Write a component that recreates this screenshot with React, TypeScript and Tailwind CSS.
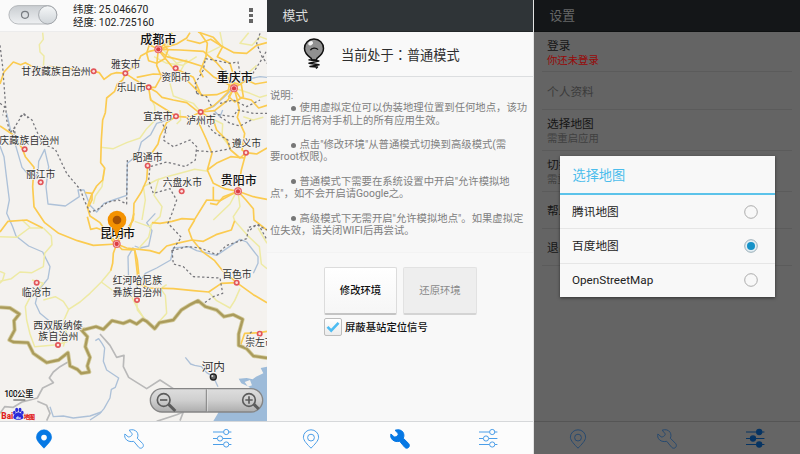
import React from 'react';

const FONT = "font-['Roboto','Noto_Sans_CJK_SC',sans-serif]";

/* ---------- icons ---------- */
type IconProps = { color: string; filled?: boolean; hole?: string };

function PinIcon({ color, filled, hole = '#fcfcfc' }: IconProps) {
  return (
    <svg width="18" height="20" viewBox="0 0 18 20" fill="none">
      <path
        d="M9 19.2C5.6 15.6 1.4 11.7 1.4 8.2A7.6 7.4 0 0 1 16.6 8.2C16.6 11.7 12.4 15.6 9 19.2Z"
        fill={filled ? color : 'none'}
        stroke={color}
        strokeWidth={filled ? 0.6 : 1}
      />
      <circle cx="9" cy="8.6" r={filled ? 2.8 : 3.4} fill={filled ? hole : 'none'} stroke={filled ? 'none' : color} strokeWidth="1" />
    </svg>
  );
}

function WrenchIcon({ color, filled }: IconProps) {
  return (
    <svg width="20" height="20" viewBox="0 0 20 20" fill="none">
      <path
        d="M5 1.300C8 .1 11.400 .7 13 3.200C14.200 5.100 14.200 7.300 13.300 9.200L18.500 14.400C19.700 15.700 19.600 17.300 18.600 18.400C17.500 19.500 15.900 19.500 14.700 18.300L9.700 12.300C7.200 12.900 4.500 12.600 2.600 10.900C.9 9.400 .3 7.200 .9 5L4.200 7.900C5.700 8.100 7.500 7.300 8.200 5.500C8.200 3.900 6.400 2.700 5 1.300Z"
        fill={filled ? color : 'none'}
        stroke={color}
        strokeWidth="1"
        strokeLinejoin="round"
      />
    </svg>
  );
}

function SlidersIcon({ color, filled }: IconProps) {
  const rows = [
    { y: 4, x: 14.2 },
    { y: 10.5, x: 8 },
    { y: 16.5, x: 14.2 },
  ];
  return (
    <svg width="20" height="20" viewBox="0 0 20 20" fill="none" stroke={color} strokeWidth={filled ? 1.1 : 1}>
      {rows.map((r) => (
        <g key={r.y}>
          <path d={`M1 ${r.y}H${r.x - 2.8}M${r.x + 2.8} ${r.y}H19.4`} />
          <circle cx={r.x} cy={r.y} r="2.6" fill={filled ? color : 'none'} />
        </g>
      ))}
    </svg>
  );
}

function TabBar({ active, dark }: { active: number; dark?: boolean }) {
  const on = dark ? '#063463' : '#0678e4';
  const off = dark ? '#274a70' : '#4b9ee8';
  return (
    <nav className={`grid h-[33px] shrink-0 grid-cols-3 border-t ${dark ? 'border-[#555555] bg-[#656565]' : 'border-[#d6d8da] bg-[#fcfcfc]'}`}>
      <div className="flex items-center justify-center pt-px pr-px">
        <PinIcon color={active === 0 ? on : off} filled={active === 0} />
      </div>
      <div className="flex items-center justify-center pt-px">
        <WrenchIcon color={active === 1 ? on : off} filled={active === 1} />
      </div>
      <div className="flex items-center justify-center pr-px">
        <SlidersIcon color={active === 2 ? on : off} filled={active === 2} />
      </div>
    </nav>
  );
}

/* ---------- map (drawn at three units per pixel) ---------- */
const MAJOR_ROADS = [
  'M0 252L12 216L40 186L62 194L76 188L104 204L150 200L205 206L281 214L298 218L312 238L334 222L350 218L376 220L392 206L410 196L422 168L448 154L475 148',
  'M376 220L400 236L445 262L470 276L486 292L520 300L560 308L590 332L602 336',
  'M376 222L368 240L352 252L344 274L320 294L316 338L308 360L304 420L302 488L314 504L308 540L290 558L274 586L262 622L270 648L300 668L340 726L350 732',
  'M475 148L466 120L460 98',
  'M475 148L448 134L440 160L446 182L470 190L494 176L504 150L490 132L475 134',
  'M475 148L530 132L560 114L570 98M475 148L510 120L516 98M475 148L540 150L610 154L650 188L672 214L702 262',
  'M475 148L500 170L560 184L604 198L640 230L702 262',
  'M475 150L520 205L548 216L580 232L604 286L650 284L702 264',
  'M410 232L460 222L500 224L560 240L604 284',
  'M475 148L470 196L484 230L466 262L446 262',
  'M446 262L452 300L500 330L528 349L570 352L602 336L644 332L684 300L702 264',
  'M600 98L622 130L618 170L600 214L610 232',
  'M560 120L600 130L632 118L668 140L652 170L690 190L702 230L702 264',
  'M594 96L640 112L664 138L702 158L740 160L770 136L801 128',
  'M702 264L740 240L766 252L801 246M702 264L720 292L754 300L776 324L801 316M702 264L712 300L718 330L712 352L734 400L726 450L738 458',
  'M702 264L686 290L704 306L730 290L724 254L690 246L684 276L660 300L640 318L602 336',
  'M528 349L500 368L480 408L474 432L448 470L443 498L440 540L424 576L402 610L400 660L350 732',
  'M602 336L598 372L620 420L636 460L622 510L640 550L674 566L714 574',
  'M602 336L640 360L650 390L680 420L692 450L720 474L738 458L770 462L801 444',
  'M738 458L724 510L718 546L714 574L760 590L801 598',
  'M622 510L652 488L692 470L734 474',
  'M714 574L690 586L660 602L620 600L584 658L546 656L516 664L480 670L456 668',
  'M640 560L640 600M714 574L670 590L650 614L630 610M714 574L738 600L760 626L762 660L801 690',
  'M0 378L36 402L66 444L76 470L102 502L98 560L102 620L134 668L176 700L232 722L280 736L350 732',
  'M350 732L330 700L290 684L272 688L262 650',
  'M350 732L380 744L450 752L478 760L500 738L530 730L576 720L610 724L648 704L694 690L704 662',
  'M350 732L340 760L338 790L332 812M350 732L366 748L404 750L412 780L416 820L418 852L446 864L520 866L580 872L626 876L664 850L710 848L760 884L801 908',
  'M404 750L412 820L416 858M576 718L606 754L644 782L668 812L710 848',
  'M576 718L566 690L584 660M720 1040L734 1000L778 998L801 994M350 732L362 700L390 684L402 640',
  'M256 578L276 580L276 600L266 620M0 696L24 664L80 660L128 684',
];

const MINOR_ROADS = [
  'M128 98L130 118L118 134L120 156L132 168L130 204',
  'M302 442L340 446L380 428L420 414L440 386L466 360L464 318L450 290',
  'M624 514L584 508L540 520L500 530L470 540L430 560L436 600L426 660',
  'M476 536L462 586L486 620L480 650L448 680L404 664',
  'M130 684L154 708L156 734L134 760L130 800L96 818L60 816L34 836L0 844',
  'M332 812L304 846L270 880L240 906L206 928L192 960L200 1002L190 1040',
  'M96 840L130 850L110 872L90 892L76 920L80 960L90 1002L104 1040L172 1034L204 1024',
  'M130 900L166 890L190 904L206 928M304 846L336 870L396 892L410 920L436 962L464 980L500 940L496 886L482 866L500 854',
  'M410 900L412 930L440 964M626 876L650 902L690 924L704 902L720 866',
  'M704 662L746 710L778 740L784 792L801 806M774 684L801 730',
  'M540 216L560 180L530 190L490 150L520 112M462 170L500 190L548 196L590 170',
  'M602 336L580 310L520 288L510 250M660 96L668 136L620 160L612 190',
  'M746 98L720 130L756 136L780 110L801 118M130 684L88 684L50 712L0 710M66 660L90 682',
  'M714 574L720 620L700 650L704 662M640 660L690 612L710 574M314 504L306 560L286 588L280 612',
  'M0 814L14 820L8 840L0 850M412 750L446 712L456 668M624 350L668 372L666 410L690 440M700 264L736 226L770 196',
  'M540 330L542 360L530 372M702 264L750 280L780 292L801 286M730 350L760 360L790 352',
];

const RIVERS = [
  'M0 438L12 470L18 520L28 600L20 640L38 680L48 708L86 738L128 756L150 800L144 836L116 870L106 910L120 940L152 966L148 1000',
  'M20 340L34 400L48 440L66 502L100 540L114 520L116 484L134 448L146 500L138 560L144 612L196 618L238 590L234 570L252 570L270 616L290 636L312 610L340 600L380 586L382 490L412 466L424 426L452 404L470 370L528 352',
  'M400 742L384 770L386 850L398 880L436 820L470 804L512 780L520 744L566 740L590 752L650 766L720 718L740 726L774 770L774 790L760 820',
  'M602 336L640 320L672 292L702 262L740 238L780 230L801 232',
  'M286 1022L296 1016L306 1030L314 1044L310 1084L320 1110L356 1134L346 1162L334 1168L330 1194L312 1226L300 1240L270 1260',
  'M304 1236L270 1248L220 1254L190 1248L160 1250L150 1220',
  'M556 1072L572 1092L584 1096L604 1100L620 1118L640 1130L654 1160',
  'M404 738L420 744L446 738L456 692L440 668L466 640M640 330L660 350L668 330',
];

const DASHES = [
  'M0 136L8 200L14 280L20 360L30 398L40 388L70 340L96 360L126 430L166 448L200 520L242 570L252 600L270 636L290 630L324 606L356 600L380 612L382 480',
  'M40 390L46 430L44 380M60 350L70 342L84 354M0 310L14 320L8 346',
  'M590 280L586 250L610 210L616 176L640 180L690 190L714 186L720 220L750 234L790 170L801 150',
  'M590 280L620 290L634 318M640 342L700 350L712 330L760 340L801 340M660 310L700 300L740 320L780 300',
  'M500 380L490 420L520 440L570 420L590 440L586 480L556 500L500 486L450 500L446 540L460 580L510 566L530 600L516 640L504 670L544 712L516 752L560 740L600 744L650 764L680 736L740 716L746 682L776 674L801 720',
  'M516 752L520 792L550 800L580 830L620 832L660 834L668 880L640 890L608 912',
  'M590 452L640 456L690 446L684 420L640 396L620 370M660 350L690 370L720 378L754 360M750 690L770 674L801 690',
  'M780 100L770 130L786 170L801 190M512 360L480 352L500 400M740 1010L760 990',
];

const BORDER = [
  'M0 922L30 924L58 942L42 962L44 990L28 1020L40 1026L84 1028L100 1060L120 1074L140 1088L176 1080L204 1058L210 1098L232 1108L244 1120L268 1116L262 1098L270 1072L256 1040L262 1010L244 990L256 988L288 980L310 988L336 962L370 970L390 962L410 972L428 958L440 964L464 986L478 968L520 960L544 930L570 914L594 902L616 920L650 930L672 950L700 944L728 958L716 1002L716 1036L740 1046L760 1068L801 1074',
];

const THIN_BORDER = [
  'M300 1002L330 1036L350 1072L372 1066L370 1100L386 1132L440 1166L480 1140L520 1166',
  'M204 1086L180 1100L160 1116L148 1134L160 1148L128 1164L112 1194L90 1200L66 1206L40 1222L14 1220L0 1240M112 1204L140 1216L150 1240L140 1262',
  'M470 1264L530 1244L550 1236L540 1262',
];

type Place = { x: number; y: number; t: string; w: number; big?: boolean };
const PLACES: Place[] = [
  { x: 421, y: 131, t: '成都市', w: 108, big: true },
  { x: 650, y: 247, t: '重庆市', w: 108, big: true },
  { x: 662, y: 555, t: '贵阳市', w: 108, big: true },
  { x: 300, y: 715, t: '昆明市', w: 105, big: true },
  { x: 333, y: 205, t: '雅安市', w: 88 },
  { x: 64, y: 226, t: '甘孜藏族自治州', w: 208 },
  { x: 484, y: 243, t: '资阳市', w: 88 },
  { x: 350, y: 274, t: '乐山市', w: 88 },
  { x: 430, y: 361, t: '宜宾市', w: 88 },
  { x: 559, y: 373, t: '泸州市', w: 88 },
  { x: -2, y: 432, t: '庆藏族自治州', w: 180 },
  { x: 695, y: 442, t: '遵义市', w: 88 },
  { x: 398, y: 483, t: '昭通市', w: 90 },
  { x: 78, y: 533, t: '丽江市', w: 88 },
  { x: 488, y: 559, t: '六盘水市', w: 118 },
  { x: 338, y: 851, t: '红河哈尼族', w: 148 },
  { x: 338, y: 887, t: '彝族自治州', w: 148 },
  { x: 667, y: 833, t: '百色市', w: 88 },
  { x: 65, y: 887, t: '临沧市', w: 88 },
  { x: 100, y: 986, t: '西双版纳傣', w: 148 },
  { x: 115, y: 1021, t: '族自治州', w: 120 },
  { x: 736, y: 1037, t: '崇左市', w: 88 },
];

const DOTS = [
  [376, 220], [281, 214], [527, 205], [446, 262], [528, 349], [602, 336], [74, 448], [738, 458],
  [443, 497], [122, 547], [545, 574], [110, 848], [411, 900], [710, 848], [174, 1035], [779, 1001],
];
const BIG_DOTS = [[475, 148], [702, 265], [714, 574], [350, 732]];

function Lines({ d, stroke, width, dash }: { d: string[]; stroke: string; width: number; dash?: string }) {
  return (
    <g fill="none" stroke={stroke} strokeWidth={width} strokeDasharray={dash} strokeLinejoin="round">
      {d.map((p) => (
        <path key={p} d={p} />
      ))}
    </g>
  );
}

function MapView() {
  return (
    <svg className={`block h-[389px] w-[267px] shrink-0 ${FONT}`} viewBox="0 96 801 1167" preserveAspectRatio="none">
      <defs>
        <linearGradient id="zoomBar" x1="0" y1="0" x2="0" y2="1">
          <stop offset="0" stopColor="#dedede" />
          <stop offset=".5" stopColor="#cfcfcf" />
          <stop offset="1" stopColor="#adadad" />
        </linearGradient>
      </defs>
      <rect x="0" y="96" width="801" height="1167" fill="#f4f2ef" />
      <path
        d="M801 1100L782 1104L790 1120L768 1130L758 1138L740 1134L716 1136L724 1150L742 1158L754 1166L728 1176L700 1190L664 1210L654 1240L640 1263H801Z"
        fill="#9dbbd9"
      />
      <path d="M734 1146L750 1140L756 1156L744 1160Z" fill="#f4f2ef" />
      <Lines d={RIVERS} stroke="#adc1d8" width={4} />
      <Lines d={MINOR_ROADS} stroke="#eeeaa4" width={4.5} />
      <Lines d={MAJOR_ROADS} stroke="#fbcb50" width={5} />
      <Lines d={THIN_BORDER} stroke="#b9b9b9" width={5} />
      <Lines d={DASHES} stroke="#77777c" width={3.8} dash="7 7" />
      <Lines d={BORDER} stroke="#d3cb9c" width={12} />
      <Lines d={BORDER} stroke="#aa9b5b" width={7} />
      {DOTS.map(([x, y]) => (
        <g key={`${x}-${y}`}>
          <circle cx={x} cy={y} r="9" fill="#e2565a" />
          <circle cx={x} cy={y} r="4" fill="#fbe1df" />
        </g>
      ))}
      {BIG_DOTS.map(([x, y]) => (
        <g key={`${x}-${y}`}>
          <circle cx={x} cy={y} r="12" fill="#e8666a" />
          <circle cx={x} cy={y} r="8.5" fill="#f8c9c8" />
          <circle cx={x} cy={y} r="6.5" fill="#dd3b42" />
        </g>
      ))}
      {PLACES.map((p) => (
        <text
          key={p.t}
          x={p.x}
          y={p.y}
          textLength={p.w}
          fontSize={p.big ? 36 : 29.5}
          fontWeight={p.big ? 500 : 400}
          fill={p.big ? '#111' : '#333'}
          stroke="#f8f6f3"
          strokeWidth="4"
          paintOrder="stroke"
        >
          {p.t}
        </text>
      ))}
      <text x="605" y="1113" textLength="70" fontSize="35" fill="#333" stroke="#f8f6f3" strokeWidth="5" paintOrder="stroke">
        河内
      </text>
      <circle cx="640" cy="1131" r="9" fill="#666" stroke="#222" strokeWidth="4" />
      <circle cx="637" cy="1128" r="3" fill="#ddd" />

      {/* current position marker */}
      <path d="M350 718C346 698 340 684 332 676C322 668 324 650 350 650C378 650 380 668 370 676C360 684 354 698 350 718Z" fill="#f29100" />
      <circle cx="351" cy="660" r="28" fill="#f49200" />
      <circle cx="351" cy="660" r="13" fill="#a65304" />

      {/* scale and logo */}
      <text x="13" y="1191" textLength="88" fontSize="26" fontWeight="500" fill="#111" stroke="#f8f6f3" strokeWidth="4" paintOrder="stroke">
        100公里
      </text>
      <path d="M40 1200H76" fill="none" stroke="#444" strokeWidth="3" />
      <text x="4" y="1256" textLength="36" fontSize="25" fontWeight="900" fill="#e01f1f" lengthAdjust="spacingAndGlyphs">
        Bai
      </text>
      <g fill="#2b2bd8">
        <ellipse cx="43" cy="1238" rx="4" ry="6" />
        <ellipse cx="50" cy="1230" rx="4.500" ry="6.500" />
        <ellipse cx="60" cy="1230" rx="4.500" ry="6.500" />
        <ellipse cx="67" cy="1238" rx="4" ry="6" />
        <path d="M55 1237C62 1237 71 1247 70 1254C67 1261 43 1261 40 1254C39 1247 48 1237 55 1237Z" />
      </g>
      <text x="48" y="1256" fontSize="12" fontWeight="700" fill="#fff">
        du
      </text>
      <text x="71" y="1256" textLength="34" fontSize="18" fontWeight="900" fill="#e01f1f">
        地图
      </text>

      {/* zoom control */}
      <rect x="451" y="1166" width="337" height="70" rx="35" fill="url(#zoomBar)" stroke="#858585" strokeWidth="4" />
      <path d="M619 1168V1234" stroke="#777" strokeWidth="3" />
      <path d="M622 1168V1234" stroke="#e8e8e8" strokeWidth="2" />
      <g fill="none" stroke="#5c5c5c" strokeWidth="5">
        <circle cx="491" cy="1200" r="19" />
        <path d="M480 1200H502" />
        <path d="M506 1213L526 1233" strokeWidth="9" />
        <circle cx="747" cy="1200" r="19" />
        <path d="M736 1200H758M747 1189V1211" />
        <path d="M762 1213L776 1227" strokeWidth="9" />
      </g>
    </svg>
  );
}

function MapScreen() {
  return (
    <section className="flex h-[454px] w-[267px] shrink-0 flex-col bg-[#fafafa]">
      <header className="flex h-8 shrink-0 items-start border-b border-[#ececec] bg-[#fafafa] pr-[14px] pl-2">
        <svg className="mt-1 shrink-0" width="50" height="22" viewBox="0 0 50 22">
          <defs>
            <linearGradient id="track" x1="0" y1="0" x2="0" y2="1">
              <stop offset="0" stopColor="#c9cdd1" />
              <stop offset="1" stopColor="#eef0f2" />
            </linearGradient>
            <linearGradient id="knob" x1="0" y1="0" x2="0" y2="1">
              <stop offset="0" stopColor="#f5f7f8" />
              <stop offset="1" stopColor="#d0d5d9" />
            </linearGradient>
          </defs>
          <rect x=".9" y="1.6" width="48" height="18.4" rx="9.2" fill="url(#track)" stroke="#a9adb1" strokeWidth=".8" />
          <circle cx="17" cy="10.8" r="3.5" fill="none" stroke="#777b80" strokeWidth="1.2" />
          <circle cx="39.7" cy="10.9" r="9.1" fill="url(#knob)" stroke="#999da2" strokeWidth=".8" />
        </svg>
        <div className={`mt-1 ml-[15px] flex-1 text-[10.4px] leading-[12.6px] whitespace-nowrap text-[#222] ${FONT}`}>
          <div>纬度: 25.046670</div>
          <div>经度: 102.725160</div>
        </div>
        <div className="mt-2 flex flex-col gap-[2px]">
          <i className="block h-[3.5px] w-[4px] bg-[#666]" />
          <i className="block h-[3.5px] w-[4px] bg-[#666]" />
          <i className="block h-[3.5px] w-[4px] bg-[#666]" />
        </div>
      </header>
      <MapView />
      <TabBar active={0} />
    </section>
  );
}

/* ---------- mode screen ---------- */
function BulbIcon() {
  return (
    <svg width="22" height="32" viewBox="0 0 22 32" fill="none">
      <path
        d="M11 1C5.600 1 1.500 5.200 1.500 10.500C1.500 15 4.300 17.600 8.200 20.300L8.800 22H13.400L14 20.300C17.700 17.600 20.500 15 20.500 10.500C20.500 5.200 16.400 1 11 1Z"
        fill="#919191"
        stroke="#111"
        strokeWidth="1.500"
      />
      <ellipse cx="7.600" cy="5.200" rx="2.600" ry="2" fill="#f4f4f4" transform="rotate(-30 7.600 5.200)" />
      <path d="M7.400 12.200C8.600 9.800 13 9.400 15 11.600" stroke="#111" strokeWidth="1.400" />
      <path d="M5.500 21.800L15.800 23L6 25.200L16 26.800L7 28.400L14.500 29L13 30.600" stroke="#111" strokeWidth="1.500" strokeLinejoin="round" />
    </svg>
  );
}

const NOTES: string[][] = [
  ['使用虚拟定位可以伪装地理位置到任何地点，该功', '能打开后将对手机上的所有应用生效。'],
  ['点击"修改环境"从普通模式切换到高级模式(需', '要root权限)。'],
  ['普通模式下需要在系统设置中开启"允许模拟地', '点"，如不会开启请Google之。'],
  ['高级模式下无需开启"允许模拟地点"。如果虚拟定', '位失效，请关闭WIFI后再尝试。'],
];

function ModeScreen() {
  return (
    <section className={`flex h-[454px] w-[267px] shrink-0 flex-col border-r border-[#e4e4e4] bg-[#f7f7f7] ${FONT}`}>
      <header className="flex h-8 shrink-0 items-center border-b border-[#24282a] bg-[#2f3437] pt-px pl-[15.500px] text-[12.800px] leading-none text-[#dcdddd]">
        模式
      </header>
      <div className="flex h-[45px] shrink-0 items-center border-b border-[#dcdee0] bg-[#f9f9f9] pl-[36px]">
        <BulbIcon />
        <span className="ml-4 pt-0.5 text-[13.200px] leading-none whitespace-nowrap text-[#2e2e2e]">
          当前处于<span className="font-['Noto_Sans_CJK_TC',sans-serif]">：</span>普通模式
        </span>
      </div>
      <div className="h-[175px] shrink-0 pt-[13px] pl-[3px] text-[10.350px] leading-[12.260px] whitespace-nowrap text-[#808080]">
        <div>说明:</div>
        {NOTES.map(([first, second]) => (
          <div key={first} className="mb-[12.260px]">
            <div className="flex items-center pl-[21px]">
              <i className="mr-[3.500px] block size-[5px] rounded-full bg-[#777]" />
              {first}
            </div>
            <div>{second}</div>
          </div>
        ))}
      </div>
      <div className="flex-1 border-t border-[#f3f3f3] bg-[#f8f8f8] pt-[14px] pl-[57px]">
        <div className="flex gap-[6px]">
          <button className="h-[48px] w-[73px] rounded-[2px] border border-b-2 border-[#dcdcdc] border-b-[#c4c4c4] bg-linear-to-b from-white to-[#f6f6f6] text-[10.350px] font-medium text-[#111]">
            修改环境
          </button>
          <button className="h-[48px] w-[74px] rounded-[2px] border border-b-2 border-[#e2e2e2] border-b-[#d4d4d4] bg-[#eeeeee] text-[10.350px] text-[#8a8a8a]">
            还原环境
          </button>
        </div>
        <label className="mt-[3px] flex items-center gap-[3px] text-[10.350px] leading-none font-medium text-[#111]">
          <span className="flex size-[18px] items-center justify-center rounded-[2px] border border-[#bdbdbd] bg-linear-to-b from-white to-[#ececec]">
            <svg width="14" height="12" viewBox="0 0 14 12" fill="none">
              <path d="M1.500 5.800L5.200 9.600L12.500 1.800" stroke="#4dbcf2" strokeWidth="2.600" />
            </svg>
          </span>
          <span className="pt-0.5">屏蔽基站定位信号</span>
        </label>
      </div>
      <TabBar active={1} />
    </section>
  );
}

/* ---------- settings screen ---------- */
function Radio({ on }: { on?: boolean }) {
  return (
    <svg width="14" height="14" viewBox="0 0 14 14" fill="none">
      <circle cx="7" cy="7" r="6.300" fill={on ? '#e4eff4' : '#f8f8f8'} stroke={on ? '#8fa5b0' : '#a4a4a4'} strokeWidth=".9" />
      {on && <circle cx="7" cy="7" r="4" fill="#1592c8" />}
    </svg>
  );
}

type SettingProps = { title: string; sub?: string; size: string; titleColor?: string; subColor?: string };
function Setting({ title, sub, size, titleColor = 'text-[#151515]', subColor = 'text-[#404040]' }: SettingProps) {
  return (
    <div className={`flex shrink-0 flex-col justify-center border-b border-[#5b5b5b] pt-[3px] pl-[5px] ${size}`}>
      <div className={`text-[11.700px] leading-[15px] ${titleColor}`}>{title}</div>
      {sub && <div className={`text-[10.350px] leading-[14px] ${subColor}`}>{sub}</div>}
    </div>
  );
}

function SettingsScreen() {
  const options = ['腾讯地图', '百度地图', 'OpenStreetMap'];
  return (
    <section className={`relative flex h-[454px] w-[266px] shrink-0 flex-col bg-[#646464] ${FONT}`}>
      <header className="flex h-8 shrink-0 items-center border-b border-[#0e1011] bg-[#141618] pt-px pl-[15.500px] text-[12.800px] leading-none text-[#676868]">
        设置
      </header>
      <div className="flex flex-1 flex-col px-2">
        <Setting title="登录" sub="你还未登录" size="h-10" subColor="text-[#980808]" />
        <Setting title="个人资料" size="h-[38px]" titleColor="text-[#3b3b3b]" />
        <Setting title="选择地图" sub="需重启应用" size="h-[41px]" />
        <Setting title="切换语言" sub="需重启应用" size="h-[41px]" />
        <Setting title="帮助" size="h-[37px]" />
        <Setting title="退出" size="h-[37px]" />
      </div>
      <TabBar active={2} dark />

      <div className="absolute top-[156px] left-[26px] flex h-[141px] w-[215px] flex-col bg-[#f8f8f8] shadow-[0_1px_3px_rgba(0,0,0,0.5)]">
        <h2 className="flex h-[39px] shrink-0 items-center border-b-2 border-[#5cc3ea] pt-0.5 pl-[12.500px] text-[13.200px] leading-none text-[#4bbdec]">
          选择地图
        </h2>
        {options.map((name, i) => (
          <div key={name} className="flex flex-1 items-center justify-between border-b border-[#e6e6e6] pr-[17px] pl-3 text-[11.700px] leading-none text-[#222] last:border-b-0">
            <span className="pt-0.5">{name}</span>
            <Radio on={i === 1} />
          </div>
        ))}
      </div>
    </section>
  );
}

export default function App() {
  return (
    <main className="flex h-[454px] w-[800px] overflow-hidden bg-white">
      <MapScreen />
      <ModeScreen />
      <SettingsScreen />
    </main>
  );
}
